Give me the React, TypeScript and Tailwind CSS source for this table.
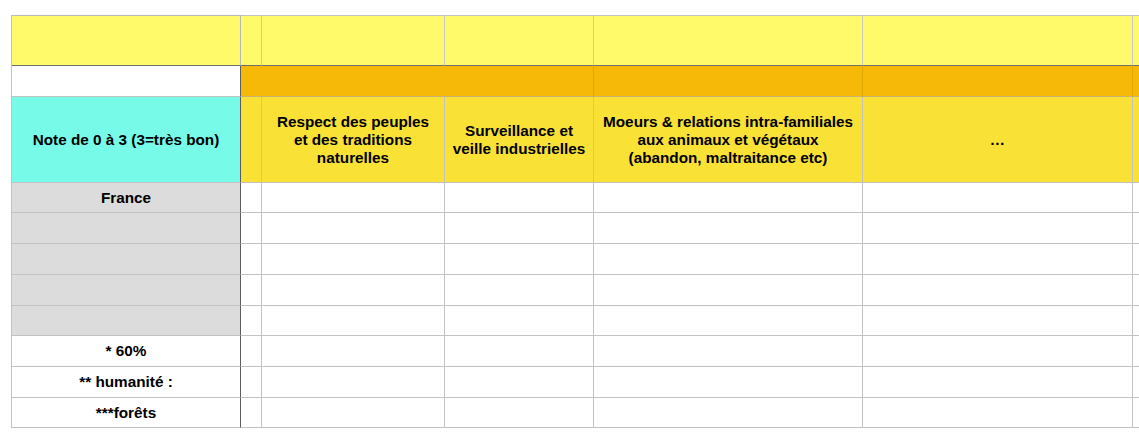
const cols = "grid-cols-[229px_21px_183px_149px_269px_270px_20px]";
const rows = "grid-rows-[50px_31px_86px_30px_31px_31px_31px_30px_31px_31px_30px]";

// bordure standard d'une cellule
const cell = "border-r border-b border-[#c2c2c2] flex items-center justify-center text-center";
const firstCol = "border-r border-b border-b-[#c2c2c2] border-r-[#5c5c5c] flex items-center justify-center text-center";

const headers = [
  "Respect des peuples\net des traditions\nnaturelles",
  "Surveillance et\nveille industrielles",
  "Moeurs & relations intra-familiales\naux animaux et végétaux\n(abandon, maltraitance etc)",
  "…",
];

const rowLabels: { label: string; grey: boolean }[] = [
  { label: "France", grey: true },
  { label: "", grey: true },
  { label: "", grey: true },
  { label: "", grey: true },
  { label: "", grey: true },
  { label: "* 60%", grey: false },
  { label: "** humanité :", grey: false },
  { label: "***forêts", grey: false },
];

export default function App() {
  return (
    <div className="w-[1139px] h-[436px] overflow-hidden bg-white font-['Liberation_Sans',Arial,sans-serif] text-black font-bold text-[15.3px] leading-[18px]">
      <div className={`ml-[11px] mt-[15px] w-[1160px] grid ${cols} ${rows} border-t border-l border-[#c2c2c2]`}>
        {/* Ligne 1 : bandeau jaune clair */}
        <div className="bg-[#fffa6a] border-b border-b-[#6e6e6e] border-r border-r-[#b8b8b8] shadow-[2px_0_3px_rgba(0,0,0,0.12)]" />
        <div className="bg-[#fffa6a] border-b border-b-[#6e6e6e] border-r border-r-[#c8c8c0]" />
        <div className="bg-[#fffa6a] border-b border-b-[#6e6e6e] border-r border-r-[#c8c8c0]" />
        <div className="bg-[#fffa6a] border-b border-b-[#6e6e6e] border-r border-r-[#c8c8c0]" />
        <div className="bg-[#fffa6a] border-b border-b-[#6e6e6e] border-r border-r-[#c8c8c0]" />
        <div className="bg-[#fffa6a] border-b border-b-[#6e6e6e] border-r border-r-[#c8c8c0]" />
        <div className="bg-[#fffa6a] border-b border-b-[#6e6e6e]" />

        {/* Ligne 2 : bandeau orange */}
        <div className="bg-white border-r border-r-[#5c5c5c] border-b border-b-[#c2c2c2]" />
        <div className="col-span-3 bg-[#f7b908] border-r border-r-[#e0a800] border-b border-b-[#c9b27a]" />
        <div className="bg-[#f7b908] border-r border-r-[#e0a800] border-b border-b-[#c9b27a]" />
        <div className="bg-[#f7b908] border-r border-r-[#e0a800] border-b border-b-[#c9b27a]" />
        <div className="bg-[#f7b908] border-b border-b-[#c9b27a]" />

        {/* Ligne 3 : en-têtes */}
        <div className={`${firstCol} bg-[#77fbe8]`}>Note de 0 à 3 (3=très bon)</div>
        <div className={`${cell} bg-[#f9e136]`} />
        {headers.map((h, i) => (
          <div key={i} className={`${cell} bg-[#f9e136] whitespace-pre-line px-1`}>
            {h}
          </div>
        ))}
        <div className="border-b border-[#c2c2c2] bg-[#f9e136]" />

        {/* Lignes de données */}
        {rowLabels.map((r, i) => (
          <div key={i} className="contents">
            <div className={`${firstCol} ${r.grey ? "bg-[#dcdcdc]" : "bg-white"}`}>{r.label}</div>
            <div className={cell} />
            <div className={cell} />
            <div className={cell} />
            <div className={cell} />
            <div className={cell} />
            <div className="border-b border-[#c2c2c2]" />
          </div>
        ))}
      </div>
    </div>
  );
}
